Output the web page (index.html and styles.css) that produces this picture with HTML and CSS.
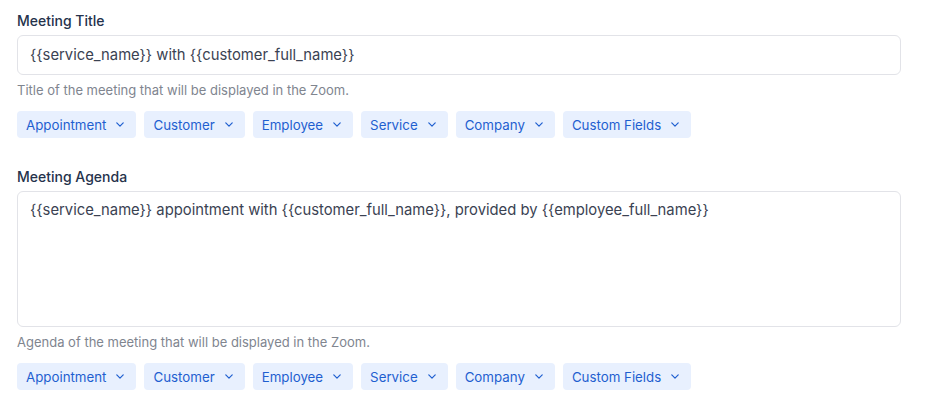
FILE: index.html
```html
<!DOCTYPE html>
<html>
<head>
<meta charset="utf-8">
<link rel="stylesheet" href="styles.css">
</head>
<body>
<div class="page">
  <section class="field">
    <div class="label">Meeting Title</div>
    <div class="input">{{service_name}} with {{customer_full_name}}</div>
    <div class="help">Title of the meeting that will be displayed in the Zoom.</div>
    <div class="tags">
      <span class="tag">Appointment<svg viewBox="0 0 10 6"><path d="M1 1l4 4 4-4"/></svg></span>
      <span class="tag">Customer<svg viewBox="0 0 10 6"><path d="M1 1l4 4 4-4"/></svg></span>
      <span class="tag">Employee<svg viewBox="0 0 10 6"><path d="M1 1l4 4 4-4"/></svg></span>
      <span class="tag">Service<svg viewBox="0 0 10 6"><path d="M1 1l4 4 4-4"/></svg></span>
      <span class="tag">Company<svg viewBox="0 0 10 6"><path d="M1 1l4 4 4-4"/></svg></span>
      <span class="tag">Custom Fields<svg viewBox="0 0 10 6"><path d="M1 1l4 4 4-4"/></svg></span>
    </div>
  </section>
  <section class="field">
    <div class="label">Meeting Agenda</div>
    <div class="input textarea">{{service_name}} appointment with {{customer_full_name}}, provided by {{employee_full_name}}</div>
    <div class="help">Agenda of the meeting that will be displayed in the Zoom.</div>
    <div class="tags">
      <span class="tag">Appointment<svg viewBox="0 0 10 6"><path d="M1 1l4 4 4-4"/></svg></span>
      <span class="tag">Customer<svg viewBox="0 0 10 6"><path d="M1 1l4 4 4-4"/></svg></span>
      <span class="tag">Employee<svg viewBox="0 0 10 6"><path d="M1 1l4 4 4-4"/></svg></span>
      <span class="tag">Service<svg viewBox="0 0 10 6"><path d="M1 1l4 4 4-4"/></svg></span>
      <span class="tag">Company<svg viewBox="0 0 10 6"><path d="M1 1l4 4 4-4"/></svg></span>
      <span class="tag">Custom Fields<svg viewBox="0 0 10 6"><path d="M1 1l4 4 4-4"/></svg></span>
    </div>
  </section>
</div>
</body>
</html>
```
FILE: styles.css
```css
* { box-sizing: border-box; }
body {
  margin: 0;
  background: #ffffff;
  font-family: Inter, "Noto Sans", sans-serif;
}
.page {
  padding: 12px 25px 0 17px;
  display: flex;
  flex-direction: column;
  gap: 30px;
}
.field {
  display: flex;
  flex-direction: column;
}
.label {
  font-size: 14px;
  font-weight: 500;
  color: #25324b;
  line-height: 18px;
  margin-bottom: 5px;
}
.input {
  height: 40px;
  border: 1px solid #e2e3e8;
  border-radius: 6px;
  padding: 0 12px;
  display: flex;
  align-items: center;
  font-size: 14.8px;
  color: #3a4252;
}
.textarea {
  height: 136px;
  align-items: flex-start;
  padding-top: 9px;
}
.help {
  font-size: 13px;
  color: #80858f;
  line-height: 16px;
  margin-top: 7px;
}
.tags {
  display: flex;
  gap: 8px;
  margin-top: 13px;
}
.tag {
  height: 27px;
  display: flex;
  align-items: center;
  gap: 10px;
  padding: 0 12px 0 9px;
  background: #e8f0fe;
  border-radius: 4px;
  font-size: 13.3px;
  color: #1f5fd0;
}
.tag svg {
  width: 8px;
  height: 5px;
  fill: none;
  stroke: #1f5fd0;
  stroke-width: 1.5;
  stroke-linecap: round;
  stroke-linejoin: round;
}
```
